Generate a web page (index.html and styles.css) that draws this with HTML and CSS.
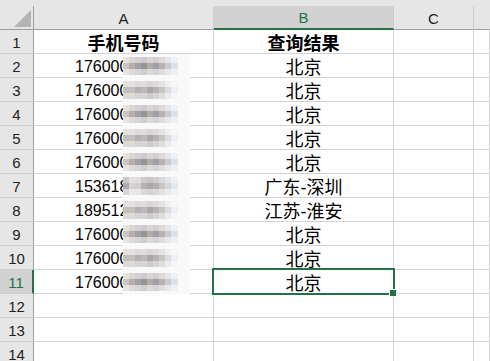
FILE: index.html
```html
<!DOCTYPE html>
<html lang="zh-CN">
<head>
  <meta charset="UTF-8">
  <title>查询结果</title>
  <link rel="stylesheet" href="styles.css">
</head>
<body>
  <div class="topbar"></div>
  <div class="sheet">
    <div class="grid">
      <!-- column headers -->
      <div class="corner"><span class="tri"></span></div>
      <div class="colhead">A</div>
      <div class="colhead active">B</div>
      <div class="colhead">C</div>
      <div class="colhead last"></div>

      <div class="rowhead">1</div>
      <div class="cell a title">手机号码</div>
      <div class="cell b title">查询结果</div>
      <div class="cell"></div><div class="cell"></div>

      <div class="rowhead">2</div>
      <div class="cell a num">176000</div>
      <div class="cell b">北京</div>
      <div class="cell"></div><div class="cell"></div>

      <div class="rowhead">3</div>
      <div class="cell a num">176000</div>
      <div class="cell b">北京</div>
      <div class="cell"></div><div class="cell"></div>

      <div class="rowhead">4</div>
      <div class="cell a num">176000</div>
      <div class="cell b">北京</div>
      <div class="cell"></div><div class="cell"></div>

      <div class="rowhead">5</div>
      <div class="cell a num">176000</div>
      <div class="cell b">北京</div>
      <div class="cell"></div><div class="cell"></div>

      <div class="rowhead">6</div>
      <div class="cell a num">176000</div>
      <div class="cell b">北京</div>
      <div class="cell"></div><div class="cell"></div>

      <div class="rowhead">7</div>
      <div class="cell a num">153618</div>
      <div class="cell b">广东-深圳</div>
      <div class="cell"></div><div class="cell"></div>

      <div class="rowhead">8</div>
      <div class="cell a num">189512</div>
      <div class="cell b">江苏-淮安</div>
      <div class="cell"></div><div class="cell"></div>

      <div class="rowhead">9</div>
      <div class="cell a num">176000</div>
      <div class="cell b">北京</div>
      <div class="cell"></div><div class="cell"></div>

      <div class="rowhead">10</div>
      <div class="cell a num">176000</div>
      <div class="cell b">北京</div>
      <div class="cell"></div><div class="cell"></div>

      <div class="rowhead active">11</div>
      <div class="cell a num">176000</div>
      <div class="cell b selected">北京</div>
      <div class="cell"></div><div class="cell"></div>

      <div class="rowhead">12</div>
      <div class="cell"></div><div class="cell"></div><div class="cell"></div><div class="cell"></div>
      <div class="rowhead">13</div>
      <div class="cell"></div><div class="cell"></div><div class="cell"></div><div class="cell"></div>
      <div class="rowhead">14</div>
      <div class="cell"></div><div class="cell"></div><div class="cell"></div><div class="cell"></div>
    </div>

    <!-- pixelated cover over the hidden digits -->
    <div class="blur">
      <div class="blur-row"><span class="mosaic m1"></span></div>
      <div class="blur-row"><span class="mosaic m2"></span></div>
      <div class="blur-row"><span class="mosaic m1"></span></div>
      <div class="blur-row"><span class="mosaic m2"></span></div>
      <div class="blur-row"><span class="mosaic m1"></span></div>
      <div class="blur-row"><span class="mosaic m3"></span></div>
      <div class="blur-row"><span class="mosaic m2"></span></div>
      <div class="blur-row"><span class="mosaic m1"></span></div>
      <div class="blur-row"><span class="mosaic m2"></span></div>
      <div class="blur-row"><span class="mosaic m1"></span></div>
    </div>
  </div>
</body>
</html>
```

FILE: styles.css
```css
* {
  box-sizing: border-box;
}

body {
  margin: 0;
  background: #fff;
  font-family: "Liberation Sans", "Noto Sans CJK SC", sans-serif;
  color: #000;
  overflow: hidden;
}

.topbar {
  height: 6px;
  background: #e6e6e6;
}

.sheet {
  position: relative;
}

.grid {
  display: grid;
  grid-template-columns: 34px 180px 180px 80px 1fr;
  grid-auto-rows: 24px;
}

.grid > div {
  border-right: 1px solid #d4d4d4;
  border-bottom: 1px solid #d4d4d4;
}

/* headers */
.corner {
  display: flex;
  justify-content: flex-end;
  align-items: flex-end;
  padding: 0 2px 2px 0;
  background: #e6e6e6;
  border-right-color: #9e9e9e !important;
  border-bottom-color: #9e9e9e !important;
}

.tri {
  width: 17px;
  height: 17px;
  background: #b4b4b4;
  clip-path: polygon(100% 0, 100% 100%, 0 100%);
}

.colhead {
  display: flex;
  align-items: center;
  justify-content: center;
  padding-top: 1px;
  background: #e6e6e6;
  font-size: 15px;
  color: #222;
  border-right-color: #cdcdcd !important;
  border-bottom-color: #9e9e9e !important;
}

.colhead.active {
  background: #d2d2d2;
  color: #217346;
  border-bottom: 2px solid #217346 !important;
}

.colhead.last {
  border-right: none !important;
}

.rowhead {
  display: flex;
  align-items: center;
  justify-content: center;
  padding-top: 1px;
  background: #e6e6e6;
  font-size: 15px;
  color: #222;
  border-right-color: #9e9e9e !important;
  border-bottom-color: #cdcdcd !important;
}

.rowhead.active {
  background: #d2d2d2;
  color: #217346;
  border-right: 2px solid #217346 !important;
}

/* cells */
.cell {
  display: flex;
  align-items: center;
  font-size: 18px;
  white-space: nowrap;
}

.cell.a {
  padding-left: 41px;
}

.cell.num {
  font-size: 16px;
  padding-top: 3px;
}

.cell.b,
.cell.title {
  justify-content: center;
  padding-left: 0;
  padding-top: 1px;
}

.cell.title {
  font-weight: 700;
}

.cell.selected {
  position: relative;
}

.cell.selected::after {
  content: '';
  position: absolute;
  top: -2px;
  left: -2px;
  right: -2px;
  bottom: -2px;
  border: 2px solid #217346;
}

.cell.selected::before {
  content: '';
  position: absolute;
  right: -4px;
  bottom: -4px;
  width: 6px;
  height: 6px;
  background: #217346;
  border: 1px solid #fff;
  z-index: 1;
}

/* mosaic over the phone numbers */
.blur {
  position: absolute;
  left: 123px;
  top: 48px;
  width: 67px;
  display: flex;
  flex-direction: column;
  background: #f9f9f9;
}

.blur-row {
  height: 24px;
  padding: 3px 0 3px 0;
}

.mosaic {
  display: block;
  width: 55px;
  height: 18px;
}

.m1 {
  background:
    linear-gradient(180deg, rgba(255,255,255,0.5) 0 6px, rgba(255,255,255,0) 6px 12px, rgba(255,255,255,0.55) 12px 18px),
    linear-gradient(90deg, #cbc4c0 0 6px, #b8aea8 6px 12px, #a2a1aa 12px 18px, #989395 18px 24px, #b2aba8 24px 30px, #a19ea4 30px 36px, #b8b4b6 36px 42px, #cdcbcf 42px 48px, #dae1ea 48px 55px);
}

.m2 {
  background:
    linear-gradient(180deg, rgba(255,255,255,0.55) 0 6px, rgba(255,255,255,0.05) 6px 12px, rgba(255,255,255,0.45) 12px 18px),
    linear-gradient(90deg, #c2bab5 0 6px, #c5bdb9 6px 12px, #b1adaf 12px 18px, #b8b3b5 18px 24px, #a5a0a3 24px 30px, #b4aeac 30px 36px, #c6c3c5 36px 42px, #dadadd 42px 48px, #eaedf2 48px 55px);
}

.m3 {
  background:
    linear-gradient(180deg, rgba(255,255,255,0.4) 0 6px, rgba(255,255,255,0.1) 6px 12px, rgba(255,255,255,0.55) 12px 18px),
    linear-gradient(90deg, #a4a2a9 0 6px, #d1cdcc 6px 12px, #ccc7c7 12px 18px, #afa9a8 18px 24px, #a39fa3 24px 30px, #afa8a5 30px 36px, #c0bec1 36px 42px, #d1d2d6 42px 48px, #e1e6ee 48px 55px);
}
```
